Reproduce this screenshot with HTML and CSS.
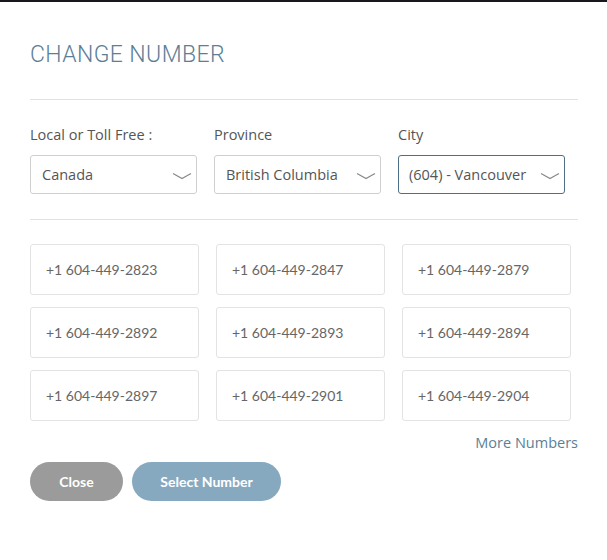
FILE: index.html
```html
<!DOCTYPE html>
<html>
<head>
<meta charset="utf-8">
<link rel="stylesheet" href="styles.css">
</head>
<body>
<div class="topbar"></div>
<div class="modal">
  <h1 class="title">CHANGE NUMBER</h1>
  <hr class="rule rule-top">
  <div class="filters">
    <div class="field">
      <label class="label">Local or Toll Free :</label>
      <div class="select"><span>Canada</span><svg class="chev" width="20" height="8" viewBox="0 0 20 8"><path d="M1 1.5 L10 6.5 L19 1.5" fill="none" stroke="#8a8a8a" stroke-width="1.3"/></svg></div>
    </div>
    <div class="field">
      <label class="label">Province</label>
      <div class="select"><span>British Columbia</span><svg class="chev" width="20" height="8" viewBox="0 0 20 8"><path d="M1 1.5 L10 6.5 L19 1.5" fill="none" stroke="#8a8a8a" stroke-width="1.3"/></svg></div>
    </div>
    <div class="field">
      <label class="label">City</label>
      <div class="select focused"><span>(604) - Vancouver</span><svg class="chev" width="20" height="8" viewBox="0 0 20 8"><path d="M1 1.5 L10 6.5 L19 1.5" fill="none" stroke="#8a8a8a" stroke-width="1.3"/></svg></div>
    </div>
  </div>
  <hr class="rule rule-mid">
  <div class="numbers">
    <div class="num">+1 604-449-2823</div>
    <div class="num">+1 604-449-2847</div>
    <div class="num">+1 604-449-2879</div>
    <div class="num">+1 604-449-2892</div>
    <div class="num">+1 604-449-2893</div>
    <div class="num">+1 604-449-2894</div>
    <div class="num">+1 604-449-2897</div>
    <div class="num">+1 604-449-2901</div>
    <div class="num">+1 604-449-2904</div>
  </div>
  <div class="more"><a class="more-link">More Numbers</a></div>
  <div class="actions">
    <button class="btn btn-close">Close</button>
    <button class="btn btn-select">Select Number</button>
  </div>
</div>
</body>
</html>
```
FILE: styles.css
```css
html, body {
  margin: 0;
  padding: 0;
  background: #ffffff;
  font-family: "Open Sans", Lato, sans-serif;
}
.topbar {
  height: 2px;
  background: #18181c;
}
.modal {
  padding: 0 29px 0 30px;
}
.title {
  margin: 0;
  padding-top: 39px;
  font-family: Roboto, sans-serif;
  font-weight: 300;
  font-size: 23px;
  line-height: 28px;
  color: #5b7f96;
  letter-spacing: 0.4px;
}
.rule {
  border: 0;
  height: 1px;
  background: #e2e2e2;
  margin: 0;
}
.rule-top {
  margin-top: 30px;
}
.filters {
  display: flex;
  gap: 17px;
  margin-top: 26px;
}
.field {
  width: 167px;
  display: flex;
  flex-direction: column;
}
.label {
  font-size: 14.5px;
  line-height: 18px;
  color: #555;
  margin-bottom: 11px;
}
.select {
  box-sizing: border-box;
  height: 39px;
  border: 1px solid #cfcfcf;
  border-radius: 3px;
  display: flex;
  align-items: center;
  justify-content: space-between;
  padding: 0 4px 0 11px;
  font-size: 14.5px;
  color: #555;
  white-space: nowrap;
}
.select.focused {
  border-color: #4d7086;
  padding-left: 10px;
}
.chev {
  flex: none;
  margin-top: 2px;
}
.rule-mid {
  margin-top: 25px;
}
.numbers {
  display: grid;
  grid-template-columns: repeat(3, 169px);
  column-gap: 17px;
  row-gap: 12px;
  margin-top: 24px;
}
.num {
  box-sizing: border-box;
  height: 51px;
  border: 1px solid #e3e3e3;
  border-radius: 3px;
  display: flex;
  align-items: center;
  padding-left: 15px;
  font-family: Lato, sans-serif;
  font-size: 14px;
  color: #666;
}
.more {
  display: flex;
  justify-content: flex-end;
  margin-top: 12px;
}
.more-link {
  font-size: 14.5px;
  line-height: 20px;
  color: #5b7f96;
}
.actions {
  display: flex;
  gap: 9px;
  margin-top: 9px;
}
.btn {
  height: 39px;
  border: 0;
  border-radius: 20px;
  color: #fff;
  font-family: Lato, sans-serif;
  font-weight: 700;
  font-size: 14px;
  padding: 0;
}
.btn-close {
  width: 93px;
  background: #9b9b9b;
}
.btn-select {
  width: 149px;
  background: #87a9bf;
}
```
